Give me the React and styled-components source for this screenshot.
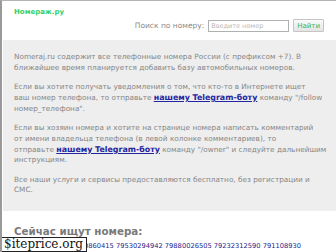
import styled, { createGlobalStyle } from "styled-components";

const GlobalStyle = createGlobalStyle`
    html, body {
        margin: 0;
        padding: 0;
        background: #fff;
        overflow: hidden;
    }
    body {
        font-family: "DejaVu Sans", Verdana, sans-serif;
    }
`;

const Page = styled.div`
    position: relative;
    height: 252px;
    border-top: 1px solid #b4b4b4;
    border-left: 2px solid #9a9a9a;
    box-sizing: border-box;
    overflow: hidden;
`;

const Header = styled.div`
    padding: 6px 12px 0 12px;
    height: 39px;
    box-sizing: border-box;
`;

const Logo = styled.div`
    font-weight: bold;
    font-size: 7px;
    color: #35d06e;
    height: 11px;
    line-height: 11px;
`;

const SearchRow = styled.form`
    display: flex;
    justify-content: flex-end;
    align-items: center;
    gap: 3px;
    margin-top: 1px;
`;

const SearchLabel = styled.span`
    font-size: 7.5px;
    color: #8a8a8a;
    margin-right: 1px;
`;

const Input = styled.input`
    width: 81px;
    height: 12px;
    box-sizing: border-box;
    border: 1px solid #b0b0b0;
    padding: 0 2px;
    font-family: inherit;
    font-size: 6.5px;
    color: #555;
    &::placeholder {
        color: #b8b8b8;
    }
`;

const Button = styled.button`
    height: 13px;
    padding: 0 3px;
    margin-left: 1px;
    font-family: inherit;
    font-size: 7px;
    color: #2fb45c;
    background: linear-gradient(#fafafa, #e4e4e4);
    border: 1px solid #c4c4c4;
    border-radius: 1px;
`;

const InfoBox = styled.div`
    margin-left: 1px;
    background: #eeeeee;
    padding: 12px 2px 0 11px;
    height: 171px;
    box-sizing: border-box;
`;

const Para = styled.p`
    margin: 0 0 8.8px 0;
    font-size: 7.3px;
    line-height: 10.7px;
    color: #868686;
    white-space: nowrap;
    &:last-child {
        margin-bottom: 0;
    }
`;

const Link = styled.a`
    color: #2424a0;
    font-weight: bold;
    font-size: 7.9px;
    text-decoration: underline;
`;

const Searching = styled.div`
    padding: 13px 12px 0 12px;
`;

const Heading = styled.h2`
    margin: 0;
    font-size: 10.3px;
    font-weight: bold;
    color: #7a7a7a;
    line-height: 14px;
`;

const Numbers = styled.div`
    margin-top: 3px;
    padding-left: 4px;
    font-size: 6.7px;
    line-height: 10px;
    white-space: nowrap;
`;

const NumberLink = styled.a`
    color: #23238a;
    text-decoration: none;
`;

const Watermark = styled.div`
    position: absolute;
    left: -2px;
    bottom: 0;
    background: #fff;
    border: 1px solid #222;
    padding: 0 3px;
    font-family: "DejaVu Serif", serif;
    font-size: 12px;
    line-height: 13px;
    color: #111;
`;

const numbers = ["79202471163", "79140860415", "79530294942", "79880026505", "79232312590", "791108930"];

export default function App() {
    return (
        <Page>
            <GlobalStyle />
            <Header>
                <Logo>Номераж.ру</Logo>
                <SearchRow onSubmit={e => e.preventDefault()}>
                    <SearchLabel>Поиск по номеру:</SearchLabel>
                    <Input placeholder="Введите номер" />
                    <Button type="submit">Найти</Button>
                </SearchRow>
            </Header>

            <InfoBox>
                <Para>
                    Nomeraj.ru содержит все телефонные номера России (с префиксом +7). В<br />
                    ближайшее время планируется добавить базу автомобильных номеров.
                </Para>
                <Para>
                    Если вы хотите получать уведомления о том, что кто-то в Интернете ищет<br />
                    ваш номер телефона, то отправьте <Link href="#">нашему Telegram-боту</Link> команду "/follow<br />
                    номер_телефона".
                </Para>
                <Para>
                    Если вы хозяин номера и хотите на странице номера написать комментарий<br />
                    от имени владельца телефона (в левой колонке комментариев), то<br />
                    отправьте <Link href="#">нашему Telegram-боту</Link> команду "/owner" и следуйте дальнейшим<br />
                    инструкциям.
                </Para>
                <Para>
                    Все наши услуги и сервисы предоставляются бесплатно, без регистрации и<br />
                    СМС.
                </Para>
            </InfoBox>

            <Searching>
                <Heading>Сейчас ищут номера:</Heading>
                <Numbers>
                    {numbers.map(n => (
                        <span key={n}>
                            <NumberLink href="#">{n}</NumberLink>{" "}
                        </span>
                    ))}
                </Numbers>
            </Searching>

            <Watermark>$iteprice.org</Watermark>
        </Page>
    );
}
